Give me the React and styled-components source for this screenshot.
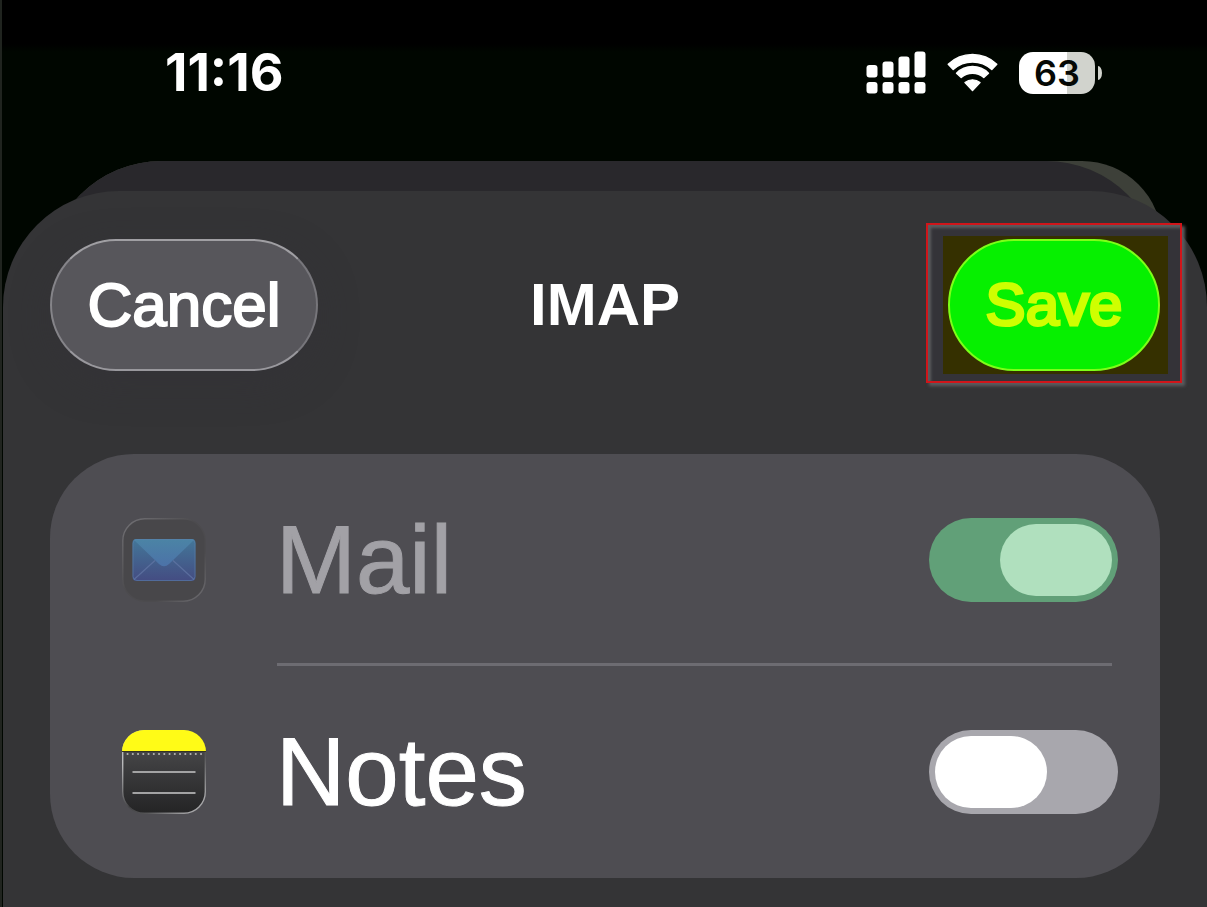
import React, { useState } from "react";
import styled, { createGlobalStyle } from "styled-components";

const GlobalStyle = createGlobalStyle`
  *, *::before, *::after { box-sizing: border-box; }
  body {
    margin: 0;
    background: #000500;
    font-family: "Liberation Sans", Arial, sans-serif;
    color: #fff;
  }
`;

const Screen = styled.main`
  display: flex;
  flex-direction: column;
  min-height: 100vh;
  overflow: hidden;
  border-left: 2px solid #20241f;
  background: linear-gradient(#000 0, #000 44px, #000600 52px);
`;

const StatusBar = styled.header`
  display: flex;
  align-items: center;
  justify-content: space-between;
  height: 161px;
  padding: 0 105px 16px 163px;
  font-family: Inter, "Liberation Sans", sans-serif;
`;

const Time = styled.time`
  font-size: 52px;
  line-height: 60px;
  font-weight: 700;
`;

const Indicators = styled.div`
  display: flex;
  align-items: center;
  gap: 21px;

  svg { display: block; }
`;

const BatteryGroup = styled.div`
  display: flex;
  align-items: center;
  gap: 3px;
`;

const Battery = styled.div`
  width: 76px;
  height: 42px;
  border-radius: 14px;
  background: linear-gradient(90deg, #fff 48px, #d1d3cd 48px);
  color: #050805;
  font-size: 36px;
  line-height: 42px;
  font-weight: 600;
  text-align: center;
`;

const BatteryTip = styled.span`
  width: 4px;
  height: 14px;
  border-radius: 0 4px 4px 0 / 0 7px 7px 0;
  background: #d1d3cd;
`;

const Stack = styled.div`
  flex: 1;
  display: grid;

  > * { grid-area: 1 / 1; }
`;

const BackSheet = styled.div`
  height: 160px;
  margin: 0 45px 0 44px;
  border-radius: 116px 80px 0 0;
  background: #3d4039;
`;

const BackSheetFace = styled.div`
  height: 100%;
  border-radius: 116px 116px 0 0;
  background: #29282c;
`;

const Sheet = styled.section`
  position: relative;
  margin: 30px 0 0 1px;
  padding: 48px 47px 28px;
  border-radius: 116px 116px 0 0;
  background: #343436;
`;

const NavBar = styled.div`
  display: grid;
  grid-template-columns: 1fr auto 1fr;
  align-items: center;
  margin-bottom: 83px;
`;

const Title = styled.h1`
  margin: 0;
  font-size: 60px;
  line-height: 76px;
  font-weight: 700;
`;

const PillButton = styled.button`
  position: relative;
  justify-self: start;
  height: 132px;
  width: ${(p) => (p.$confirm ? 212 : 268)}px;
  padding: 0;
  border: 2px solid;
  border-color: ${(p) => (p.$confirm ? "#7dff18" : "#a09fa3 #77767b #99989d #858489")};
  border-radius: 66px;
  background: ${(p) => (p.$confirm ? "#06f000" : "#57565b")};
  box-shadow: ${(p) => (p.$confirm ? "none" : "0 12px 36px #33313880")};
  color: ${(p) => (p.$confirm ? "#cfff00" : "#fff")};
  font: inherit;
  font-size: ${(p) => (p.$confirm ? 60 : 62)}px;
  line-height: 76px;
  -webkit-text-stroke: ${(p) => (p.$confirm ? 3 : 2)}px currentColor;
  text-align: center;
  white-space: nowrap;
`;

const Callout = styled.div`
  position: relative;
  justify-self: end;
`;

const CalloutTint = styled.span`
  position: absolute;
  inset: -3px -8px -3px -5px;
  background: #353000;
`;

const CalloutFrame = styled.span`
  position: absolute;
  inset: -16px -22px -12px -22px;
  border: 2px solid #d0151a;
  background: #343338;
  box-shadow: 3px 3px 3px #5c5c5f, inset 3px 3px 3px #5c5c5f;
`;

const Card = styled.ul`
  margin: 0;
  padding: 0;
  list-style: none;
  border-radius: 84px;
  background: #4e4d52;
`;

const Row = styled.li`
  position: relative;
  display: flex;
  align-items: center;
  height: 212px;
  padding: 0 42px 0 72px;

  & + &::before {
    content: "";
    position: absolute;
    top: -3px;
    left: 227px;
    right: 48px;
    height: 3px;
    background: #6d6c72;
  }
`;

const RowLabel = styled.label`
  flex: 1;
  display: flex;
  align-items: center;
  gap: 70px;
  font-size: 96px;
  line-height: 116px;
  font-weight: 400;
  -webkit-text-stroke: 1px currentColor;
  color: ${(p) => (p.$dim ? "#a2a1a6" : "#fff")};
`;

const Switch = styled.input.attrs({ type: "checkbox", role: "switch" })`
  appearance: none;
  flex: none;
  display: flex;
  width: 189px;
  height: 84px;
  margin: 0;
  padding: 6px;
  border-radius: 42px;
  background: #a8a7ad;

  &::before {
    content: "";
    width: 112px;
    height: 72px;
    border-radius: 36px;
    background: #fff;
  }
  &:checked { justify-content: flex-end; background: #34c759; }
  &:checked:disabled { background: #61a078; }
  &:checked:disabled::before { background: #b0e0be; }
`;

const SignalIcon = () => (
  <svg width="60" height="43" viewBox="0 0 60 43" fill="#fff" aria-hidden="true">
    <rect x="0.5" y="14" width="11" height="12.5" rx="3" />
    <rect x="16.5" y="10.5" width="11" height="16" rx="3" />
    <rect x="32.5" y="5.5" width="11" height="21" rx="3" />
    <rect x="48.5" y="0.5" width="11" height="26" rx="3" />
    {[0.5, 16.5, 32.5, 48.5].map((x) => (
      <rect key={x} x={x} y="31" width="11" height="11.5" rx="3" />
    ))}
  </svg>
);

const WifiIcon = () => (
  <svg width="51" height="39" viewBox="0 0 51 39" fill="#fff" stroke="#fff" strokeWidth="1.4" strokeLinejoin="round" aria-hidden="true">
    <path d="M1.2 11.3A35 35 0 0 1 49.8 11.3L44.8 16.5A28.5 28.5 0 0 0 6.2 16.5Z" />
    <path d="M9.5 20.2A22.5 22.5 0 0 1 41.5 20.2L36.8 24.4A17.5 17.5 0 0 0 14.2 24.4Z" />
    <path d="M18 29.5A12 12 0 0 1 33 29.5L25.5 37.5Z" />
  </svg>
);

const MailIcon = () => (
  <svg width="84" height="84" viewBox="0 0 84 84" aria-hidden="true">
    <defs>
      <linearGradient id="mailEdge" x1="0" y1="0" x2="1" y2="1">
        <stop offset="0" stopColor="#747377" />
        <stop offset="0.45" stopColor="#4c4b4e" />
        <stop offset="0.7" stopColor="#4c4b4e" />
        <stop offset="1" stopColor="#6f6e72" />
      </linearGradient>
      <linearGradient id="mailBody" x1="0" y1="0" x2="0" y2="1">
        <stop offset="0" stopColor="#437799" />
        <stop offset="1" stopColor="#444c82" />
      </linearGradient>
      <linearGradient id="mailFlap" x1="0" y1="0" x2="0" y2="1">
        <stop offset="0" stopColor="#4b84a5" />
        <stop offset="1" stopColor="#4c72a8" />
      </linearGradient>
    </defs>
    <rect x="0.8" y="0.8" width="82.4" height="82.4" rx="22" fill="#48474a" stroke="url(#mailEdge)" strokeWidth="1.4" />
    <rect x="10.5" y="21" width="63" height="42" rx="4" fill="url(#mailBody)" />
    <path d="M12 61.5L33 42.5M72 61.5L51 42.5" stroke="#6478a6" strokeOpacity="0.7" strokeWidth="1.2" />
    <path d="M12 22Q13 21 15 21H69Q71 21 72 22L47 46Q42 50.5 37 46Z" fill="url(#mailFlap)" />
    <rect x="11" y="21.5" width="62" height="41" rx="4" fill="none" stroke="#5a80ab" strokeOpacity="0.6" />
  </svg>
);

const NotesIcon = () => (
  <svg width="84" height="84" viewBox="0 0 84 84" aria-hidden="true">
    <defs>
      <linearGradient id="notesBody" x1="0" y1="0" x2="0" y2="1">
        <stop offset="0.25" stopColor="#454547" />
        <stop offset="1" stopColor="#242425" />
      </linearGradient>
      <linearGradient id="notesEdge" x1="0" y1="0" x2="1" y2="1">
        <stop offset="0.2" stopColor="#b9b9bb" />
        <stop offset="0.5" stopColor="#444446" />
        <stop offset="0.65" stopColor="#555557" />
        <stop offset="0.9" stopColor="#a5a5a7" />
      </linearGradient>
      <clipPath id="notesClip"><rect width="84" height="84" rx="22" /></clipPath>
    </defs>
    <rect x="0.7" y="0.7" width="82.6" height="82.6" rx="21.5" fill="url(#notesBody)" stroke="url(#notesEdge)" strokeWidth="1.4" />
    <g clipPath="url(#notesClip)">
      <rect width="84" height="21" fill="#fffb17" />
      <rect y="21" width="84" height="1" fill="#343320" />
    </g>
    <path d="M5.5 24H80" stroke="#b4b4b0" strokeWidth="2" strokeLinecap="round" strokeDasharray="0.1 5.15" />
    <path d="M10.5 42H73.5M10.5 63H73.5" stroke="#a3a3a4" strokeWidth="2" />
  </svg>
);

export default function App() {
  const [notes, setNotes] = useState(false);
  return (
    <>
      <GlobalStyle />
      <Screen>
        <StatusBar>
          <Time>11:16</Time>
          <Indicators>
            <SignalIcon />
            <WifiIcon />
            <BatteryGroup>
              <Battery>63</Battery>
              <BatteryTip />
            </BatteryGroup>
          </Indicators>
        </StatusBar>
        <Stack>
          <BackSheet>
            <BackSheetFace />
          </BackSheet>
          <Sheet>
            <NavBar>
              <PillButton type="button">Cancel</PillButton>
              <Title>IMAP</Title>
              <Callout>
                <CalloutFrame />
                <CalloutTint />
                <PillButton type="button" $confirm>Save</PillButton>
              </Callout>
            </NavBar>
            <Card>
              <Row>
                <RowLabel htmlFor="mail" $dim>
                  <MailIcon />
                  Mail
                </RowLabel>
                <Switch id="mail" defaultChecked disabled />
              </Row>
              <Row>
                <RowLabel htmlFor="notes">
                  <NotesIcon />
                  Notes
                </RowLabel>
                <Switch id="notes" checked={notes} onChange={(e) => setNotes(e.target.checked)} />
              </Row>
            </Card>
          </Sheet>
        </Stack>
      </Screen>
    </>
  );
}
